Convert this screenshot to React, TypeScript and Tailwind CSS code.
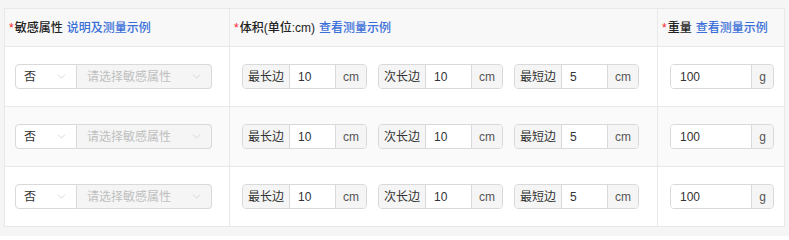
import React from "react";
import { ChevronDown } from "lucide-react";

const font = {
  fontFamily: '"Liberation Sans", "Noto Sans CJK SC", sans-serif',
};

function AddonInput({
  label,
  value,
  unit,
}: {
  label: string;
  value: string;
  unit: string;
}) {
  return (
    <div className="flex h-[25px] rounded-[4px] border border-[#d9d9d9] overflow-hidden text-[12px] text-[#333]">
      <div className="w-[47px] flex items-center justify-center bg-[#f5f5f5] border-r border-[#d9d9d9]">
        {label}
      </div>
      <div className="w-[45px] flex items-center pl-[8px] bg-white">{value}</div>
      <div className="w-[31px] flex items-center justify-center bg-[#f5f5f5] border-l border-[#d9d9d9] text-[#555]">
        {unit}
      </div>
    </div>
  );
}

function Row({ striped }: { striped?: boolean }) {
  const bg = striped ? "bg-[#fafafa]" : "bg-white";
  return (
    <div className={`grid grid-cols-[225px_428px_127px] h-[60px] border-b border-[#e8e8e8] ${bg}`}>
      <div className="flex items-center pl-[10px] border-r border-[#e8e8e8]">
        <div className="flex h-[25px]">
          <div className="w-[62px] flex items-center justify-between pl-[8px] pr-[8px] bg-white border border-[#d9d9d9] rounded-l-[4px] text-[12px] text-[#333]">
            <span>否</span>
            <ChevronDown size={13} strokeWidth={1.1} className="text-[#bfbfbf]" />
          </div>
          <div className="w-[135px] flex items-center justify-between pl-[10px] pr-[8px] bg-[#f5f5f5] border border-l-0 border-[#d9d9d9] rounded-r-[4px] text-[12px] text-[#c0c0c0]">
            <span>请选择敏感属性</span>
            <ChevronDown size={13} strokeWidth={1.1} className="text-[#bfbfbf]" />
          </div>
        </div>
      </div>
      <div className="flex items-center pl-[12px] gap-[11px] border-r border-[#e8e8e8]">
        <AddonInput label="最长边" value="10" unit="cm" />
        <AddonInput label="次长边" value="10" unit="cm" />
        <AddonInput label="最短边" value="5" unit="cm" />
      </div>
      <div className="flex items-center pl-[12px]">
        <div className="flex h-[25px] rounded-[4px] border border-[#d9d9d9] overflow-hidden text-[12px] text-[#333]">
          <div className="w-[80px] flex items-center pl-[9px] bg-white">100</div>
          <div className="w-[22px] flex items-center justify-center bg-[#f5f5f5] border-l border-[#d9d9d9] text-[#555]">
            g
          </div>
        </div>
      </div>
    </div>
  );
}

function HeaderCell({
  label,
  link,
  last,
}: {
  label: string;
  link: string;
  last?: boolean;
}) {
  return (
    <div
      className={`flex items-center pl-[4px] text-[12px] ${last ? "" : "border-r border-[#e8e8e8]"}`}
    >
      <span className="text-[#f5222d] mr-[1px]">*</span>
      <span className="text-[#222] font-medium">{label}</span>
      <span className="text-[#3a6fd8] font-medium ml-[4px]">{link}</span>
    </div>
  );
}

export default function App() {
  return (
    <div className="w-[789px] h-[236px] bg-[#f5f5f5] pt-[8px] pl-[4px]" style={font}>
      <div className="w-[781px] border-t border-l border-r border-[#e8e8e8] bg-white">
        <div className="grid grid-cols-[225px_428px_127px] h-[38px] bg-[#f8f8f8] border-b border-[#e8e8e8]">
          <HeaderCell label="敏感属性" link="说明及测量示例" />
          <HeaderCell label="体积(单位:cm)" link="查看测量示例" />
          <HeaderCell label="重量" link="查看测量示例" last />
        </div>
        <Row />
        <Row striped />
        <Row />
      </div>
    </div>
  );
}
